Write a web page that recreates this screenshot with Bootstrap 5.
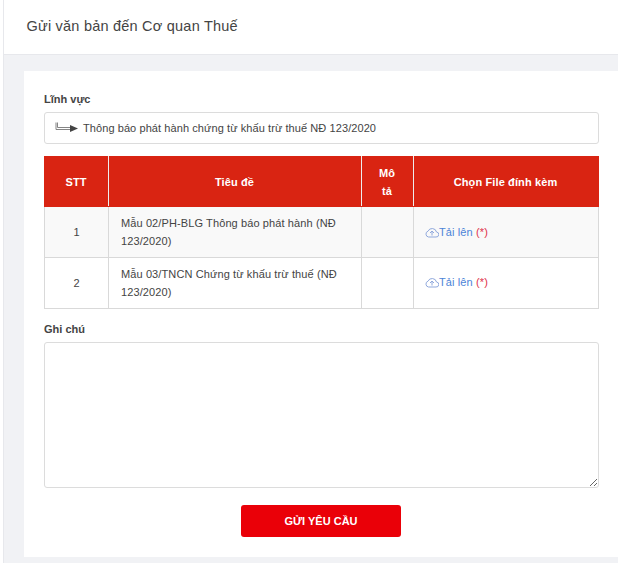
<!DOCTYPE html>
<html lang="vi">
<head>
<meta charset="utf-8">
<title>Gửi văn bản đến Cơ quan Thuế</title>
<link href="https://cdn.jsdelivr.net/npm/bootstrap@5.3.0/dist/css/bootstrap.min.css" rel="stylesheet">
<style>
html,body{height:563px;overflow:hidden}
body{background:#fff;font-family:"Liberation Sans",Arial,sans-serif;font-size:11px;color:#333;padding-left:3px}
.shell{border-left:1px solid #e7e8ec;height:563px;width:615px;background:#f1f2f5}
.page-head{height:55px;background:#fff;border-bottom:1px solid #e7e8ec;padding-left:22.5px;font-size:14.5px;letter-spacing:.22px;color:#444}
.panel{margin:16px 0 0 20px;height:486px;background:#fff;padding:20px 19px 0 20px}
.lbl{font-weight:700;font-size:11px;color:#444;height:21px;line-height:17px;margin:0}
.picker{height:32px;border:1px solid #dcdcdc;border-radius:3px;padding-left:10px;gap:5px;color:#444;letter-spacing:.08px}
.doc-table{table-layout:fixed;width:554px;margin:12px 0 12px;border-collapse:collapse;font-size:11px}
.doc-table th,.doc-table td{border:1px solid #d9d9d9;vertical-align:middle;padding:0 12px;line-height:18px;color:#444;letter-spacing:.11px}
.doc-table thead th{background:#d92412;color:#fff;font-weight:700;text-align:center;height:50px;border-color:#d92412;border-left-color:#eee;border-right-color:#eee;letter-spacing:.12px;padding:0 12px 0 11px}
.doc-table thead th:first-child{border-left-color:#d92412}
.doc-table thead th:last-child{border-right-color:#d92412}
.doc-table tbody td{height:51px}
.doc-table tbody tr:first-child td{background:#f9f9f9}
.doc-table tbody tr:last-child td:last-child{padding-bottom:2px}
.upl{color:#4d84d8;text-decoration:none;margin-left:-1px}
.req{color:#e0324a}
.note{display:block;width:555px;height:146px;border:1px solid #dcdcdc;border-radius:3px;margin-bottom:17px}
.send{display:block;width:160px;height:32px;margin-left:197px;background:#ea0008;border:0;border-radius:3px;color:#fff;font-weight:700;font-size:11px;padding:0}
.send:hover{background:#ea0008;color:#fff}
</style>
</head>
<body>
<div class="shell">
  <div class="page-head d-flex align-items-center"><span>Gửi văn bản đến Cơ quan Thuế</span></div>
  <div class="panel">
    <p class="lbl">Lĩnh vực</p>
    <div class="picker d-flex align-items-center">
      <svg width="23" height="12" viewBox="0 0 23 12" aria-hidden="true"><path d="M1 .5V7.500H15M2.500 .5V5.500H15" fill="none" stroke="#777" stroke-width=".9"/><path d="M15 3L23 6.500L15 10Z" fill="#444"/></svg>
      <span>Thông báo phát hành chứng từ khấu trừ thuế NĐ 123/2020</span>
    </div>
    <table class="doc-table">
      <colgroup><col style="width:64px"><col style="width:253px"><col style="width:52px"><col style="width:185px"></colgroup>
      <thead><tr><th>STT</th><th>Tiêu đề</th><th>Mô tả</th><th>Chọn File đính kèm</th></tr></thead>
      <tbody>
        <tr><td class="text-center">1</td><td>Mẫu 02/PH-BLG Thông báo phát hành (NĐ 123/2020)</td><td></td>
          <td><a class="upl" href="#"><svg class="align-text-bottom" width="14" height="11" viewBox="0 0 14 11" aria-hidden="true"><path d="M3.500 10H11a2.500 2.500 0 0 0 .5-5A4.500 4.500 0 0 0 3 4.200 3 3 0 0 0 3.500 10Z" fill="none" stroke="#8fa8dc"/><path d="M7 8.500V4M5 6l2-2 2 2" fill="none" stroke="#8fa8dc"/></svg>Tải lên</a> <span class="req">(*)</span></td></tr>
        <tr><td class="text-center">2</td><td>Mẫu 03/TNCN Chứng từ khấu trừ thuế (NĐ 123/2020)</td><td></td>
          <td><a class="upl" href="#"><svg class="align-text-bottom" width="14" height="11" viewBox="0 0 14 11" aria-hidden="true"><path d="M3.500 10H11a2.500 2.500 0 0 0 .5-5A4.500 4.500 0 0 0 3 4.200 3 3 0 0 0 3.500 10Z" fill="none" stroke="#8fa8dc"/><path d="M7 8.500V4M5 6l2-2 2 2" fill="none" stroke="#8fa8dc"/></svg>Tải lên</a> <span class="req">(*)</span></td></tr>
      </tbody>
    </table>
    <p class="lbl">Ghi chú</p>
    <textarea class="note" aria-label="Ghi chú"></textarea>
    <button class="btn send" type="button">GỬI YÊU CẦU</button>
  </div>
</div>
<script src="https://cdn.jsdelivr.net/npm/bootstrap@5.3.0/dist/js/bootstrap.bundle.min.js"></script>
</body>
</html>
